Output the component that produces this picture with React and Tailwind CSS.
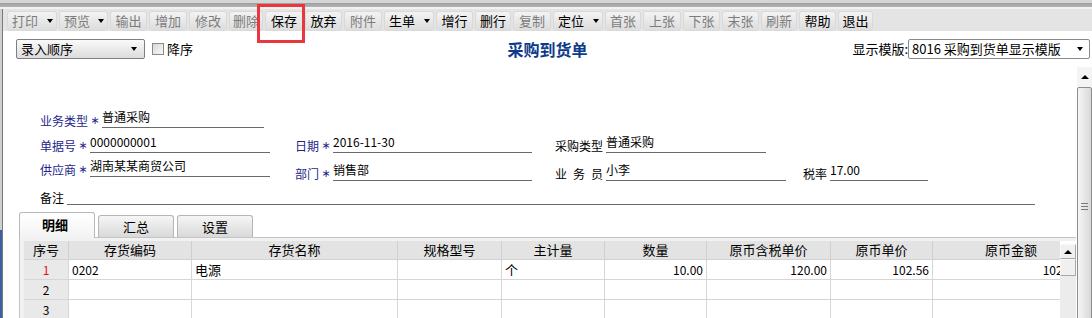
import React from "react";

const tools = [
  { t: "打印", w: "w-[50px]", dd: true },
  { t: "预览", w: "w-[49px]", dd: true },
  { t: "输出", w: "w-[37px]" },
  { t: "增加", w: "w-[38px]" },
  { t: "修改", w: "w-[38px]" },
  { t: "删除", w: "w-[34px]" },
  { t: "保存", w: "w-[38px]", on: true },
  { t: "放弃", w: "w-[37px]", on: true },
  { t: "附件", w: "w-[38px]" },
  { t: "生单", w: "w-[50px]", dd: true, on: true },
  { t: "增行", w: "w-[37px]", on: true },
  { t: "删行", w: "w-[36px]", on: true },
  { t: "复制", w: "w-[38px]" },
  { t: "定位", w: "w-[50px]", dd: true, on: true },
  { t: "首张", w: "w-[36px]" },
  { t: "上张", w: "w-[38px]" },
  { t: "下张", w: "w-[37px]" },
  { t: "末张", w: "w-[37px]" },
  { t: "刷新", w: "w-[36px]" },
  { t: "帮助", w: "w-[37px]", on: true },
  { t: "退出", w: "w-[35px]", on: true },
];

const columns = [
  "序号",
  "存货编码",
  "存货名称",
  "规格型号",
  "主计量",
  "数量",
  "原币含税单价",
  "原币单价",
  "原币金额",
];

const gridCols =
  "grid grid-cols-[45px_123px_206px_104px_103px_102px_124px_102px_157px]";

const rows = [
  ["0202", "电源", "", "个", "10.00", "120.00", "102.56", "1025.64"],
  ["", "", "", "", "", "", "", ""],
  ["", "", "", "", "", "", "", ""],
  ["", "", "", "", "", "", "", ""],
];

function DownArrow() {
  return (
    <span className="w-0 h-0 border-l-[3px] border-r-[3px] border-t-[4px] border-l-transparent border-r-transparent border-t-black" />
  );
}

function UpArrow() {
  return (
    <span className="w-0 h-0 border-l-[4px] border-r-[4px] border-b-[4px] border-l-transparent border-r-transparent border-b-black" />
  );
}

function Toolbar() {
  return (
    <div className="h-[27px] bg-[#e4e4e4] flex items-center gap-[2px] pl-[4px] pt-[2px]">
      {tools.map((b) => (
        <div
          key={b.t}
          className={`${b.w} h-[20px] flex items-center rounded-[3px] border border-[#d9d9d9] bg-linear-to-b from-[#f3f3f3] to-[#dddddd] text-[13px] ${
            b.dd ? "justify-between pl-[4px] pr-[3px]" : "justify-center"
          } ${b.on ? "text-black" : "text-[#7c7c7c]"}`}
        >
          <span>{b.t}</span>
          {b.dd && <DownArrow />}
        </div>
      ))}
    </div>
  );
}

function Field({ label, blue, star, lw, fw, value, mb }) {
  return (
    <div className={`flex items-end ${mb || ""}`}>
      <span className={`${lw} ${blue ? "text-[#1f1f8c]" : "text-black"}`}>{label}</span>
      {star ? (
        <span className="w-[14px] text-center text-[#1f1f8c] font-['DejaVu_Sans',sans-serif] text-[11px]">∗</span>
      ) : (
        <span className="w-[3px]" />
      )}
      <div className={`${fw} h-[18px] border-b border-[#6a6a6a] pb-[3px] flex items-end`}>
        {value}
      </div>
    </div>
  );
}

export default function App() {
  return (
    <div className="relative w-[1092px] h-[318px] overflow-hidden bg-white text-[12px] leading-[14px] text-black font-['Noto_Sans_CJK_SC',sans-serif]">
      {/* window frame */}
      <div className="h-[9px] flex flex-col">
        <div className="h-[3px] bg-[#d6d6d6]" />
        <div className="h-[4px] bg-linear-to-b from-[#9e9e9e] to-[#b4b4b4]" />
        <div className="h-[2px] bg-[#f2f2f2]" />
      </div>

      <div className="flex h-[309px]">
        <div className="w-[3px] flex flex-col border-r border-[#7a7a7a]">
          <div className="h-[221px] bg-[#cfcfcf]" />
          <div className="flex-1 bg-[#3c5f9e]" />
        </div>

        <div className="flex-1 flex flex-col">
          <Toolbar />

          <div className="flex-1 flex flex-col bg-white">
            {/* top row */}
            <div className="mt-[8px] h-[20px] grid grid-cols-[1fr_auto_1fr] items-center">
              <div className="flex items-center pl-[13px]">
                <div className="w-[129px] h-[20px] border border-[#7f7f7f] rounded-[2px] bg-linear-to-b from-[#fafafa] to-[#dcdcdc] flex items-center justify-between pl-[4px] pr-[7px] text-[13px]">
                  <span>录入顺序</span>
                  <DownArrow />
                </div>
                <div className="ml-[7px] w-[12px] h-[12px] border border-[#8a8a8a] bg-linear-to-br from-[#d8d8d8] to-[#f8f8f8]" />
                <span className="ml-[3px] text-[13px]">降序</span>
              </div>
              <div className="text-[16px] leading-[20px] font-bold text-[#0d3a8a]">采购到货单</div>
              <div className="flex items-center justify-end pr-[2px] text-[13px]">
                <span>显示模版:</span>
                <div className="w-[182px] h-[20px] border border-[#8a8a8a] rounded-[2px] bg-white flex items-center justify-between pl-[3px] pr-[6px]">
                  <span>8016 采购到货单显示模版</span>
                  <DownArrow />
                </div>
              </div>
            </div>

            <div className="flex flex-1 min-h-0">
              <div className="flex-1 flex flex-col">
                {/* header form */}
                <div className="mt-[49px] pl-[37px] flex flex-col">
                  <div className="h-[20px] flex items-end">
                    <Field label="业务类型" blue star lw="w-[48px]" fw="w-[162px]" value="普通采购" />
                  </div>
                  <div className="h-[25px] flex items-end">
                    <div className="w-[255px]">
                      <Field label="单据号" blue star lw="w-[36px]" fw="w-[180px]" value="0000000001" />
                    </div>
                    <div className="w-[260px]">
                      <Field label="日期" blue star lw="w-[24px]" fw="w-[199px]" value="2016-11-30" />
                    </div>
                    <div className="w-[248px]">
                      <Field label="采购类型" lw="w-[48px]" fw="w-[160px]" value="普通采购" />
                    </div>
                  </div>
                  <div className="h-[28px] flex items-end">
                    <div className="w-[255px]">
                      <Field label="供应商" blue star lw="w-[36px]" fw="w-[180px]" value="湖南某某商贸公司" mb="mb-[4px]" />
                    </div>
                    <div className="w-[260px]">
                      <Field label="部门" blue star lw="w-[24px]" fw="w-[199px]" value="销售部" />
                    </div>
                    <div className="w-[248px] flex items-end">
                      <span className="w-[48px] flex justify-between">
                        <span>业</span>
                        <span>务</span>
                        <span>员</span>
                      </span>
                      <span className="w-[3px]" />
                      <div className="w-[180px] h-[18px] border-b border-[#6a6a6a] pb-[3px] flex items-end">小李</div>
                    </div>
                    <Field label="税率" lw="w-[24px]" fw="w-[98px]" value="17.00" />
                  </div>
                  <div className="h-[24px] flex items-end">
                    <Field label="备注" lw="w-[24px]" fw="w-[968px]" value="" />
                  </div>
                </div>

                {/* tabs */}
                <div className="mt-[7px] pl-[16px] flex items-end h-[25px] text-[13px]">
                  <div className="relative z-10 w-[76px] h-[26px] mb-[-1px] border border-b-0 border-[#b9b9b9] rounded-t-[3px] bg-linear-to-b from-white to-[#f3f3f3] flex items-center justify-center pr-[4px] pb-[2px] font-bold">
                    明细
                  </div>
                  <div className="ml-[3px] w-[76px] h-[22px] border border-b-0 border-[#b5b5b5] rounded-t-[3px] bg-linear-to-b from-[#f6f6f6] to-[#d9d9d9] flex items-end justify-center pb-[3px]">
                    汇总
                  </div>
                  <div className="ml-[3px] w-[76px] h-[22px] border border-b-0 border-[#b5b5b5] rounded-t-[3px] bg-linear-to-b from-[#f6f6f6] to-[#d9d9d9] flex items-end justify-center pb-[3px]">
                    设置
                  </div>
                </div>

                {/* table panel */}
                <div className="ml-[16px] flex-1 border-l border-t border-[#c4c4c4] bg-[#f1f1f1] pt-[3px] pl-[4px] flex">
                  <div className="w-[1036px] overflow-hidden bg-white">
                    <div className={`${gridCols} h-[19px] bg-[#e3e3e3] border-b border-[#d2d2d2] text-[13px]`}>
                      {columns.map((c) => (
                        <div key={c} className="border-r border-[#cfcfcf] flex items-center justify-center">
                          {c}
                        </div>
                      ))}
                    </div>
                    {rows.map((r, i) => (
                      <div key={i} className={`${gridCols} h-[20px] border-b border-[#d6d6d6]`}>
                        <div
                          className={`bg-[#e9e9e9] border-r border-[#d6d6d6] flex items-center justify-center ${
                            i === 0 ? "text-[#e01010]" : "text-black"
                          }`}
                        >
                          {i + 1}
                        </div>
                        {r.map((v, j) => (
                          <div
                            key={j}
                            className={`border-r border-[#d6d6d6] flex items-center whitespace-nowrap ${
                              j >= 4 ? "justify-end pr-[3px]" : "pl-[3px]"
                            } ${j === 1 || j === 3 ? "text-[13px]" : ""}`}
                          >
                            {v}
                          </div>
                        ))}
                      </div>
                    ))}
                  </div>
                  <div className="w-[16px] flex flex-col bg-[#ececec]">
                    <div className="h-[3px] bg-white" />
                    <div className="h-[15px] border border-[#a8a8a8] border-t-[#f8f8f8] border-l-[#f8f8f8] bg-[#f0f0f0] flex items-center justify-center">
                      <UpArrow />
                    </div>
                    <div className="h-[17px] border border-[#a8a8a8] border-t-[#f8f8f8] border-l-[#f8f8f8] bg-[#f0f0f0]" />
                  </div>
                </div>
              </div>

              {/* page scrollbar */}
              <div className="w-[15px] ml-[1px] mt-[8px] flex flex-col bg-[#f4f4f4]">
                <div className="h-[20px] flex items-center justify-center">
                  <UpArrow />
                </div>
                <div className="flex-1 border border-[#8c8c8c] rounded-t-[2px] bg-linear-to-r from-[#f6f6f6] to-[#d8d8d8] flex flex-col items-center gap-[2px] pt-[115px]">
                  <div className="w-[7px] h-px bg-[#7a7a7a]" />
                  <div className="w-[7px] h-px bg-[#7a7a7a]" />
                  <div className="w-[7px] h-px bg-[#7a7a7a]" />
                </div>
              </div>
            </div>
          </div>
        </div>
      </div>

      {/* highlight box */}
      <div className="absolute left-[257px] top-[4px] w-[48px] h-[39px] border-[3px] border-[#e8383d]" />
    </div>
  );
}
